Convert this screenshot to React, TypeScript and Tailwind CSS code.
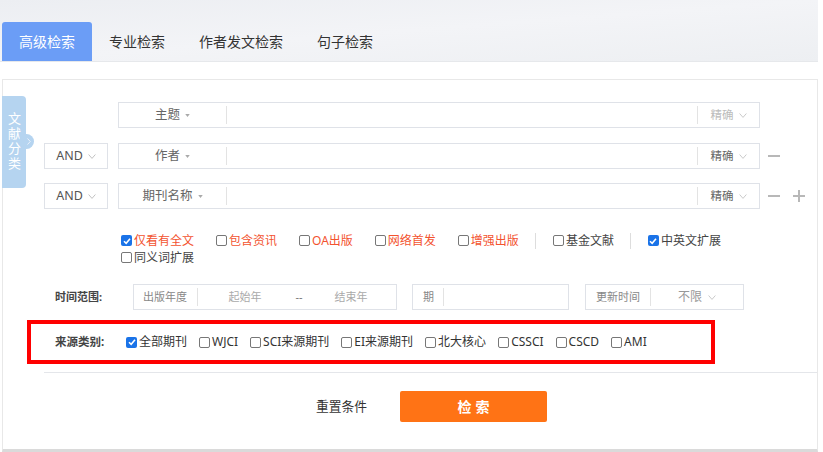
const tabs = ['高级检索', '专业检索', '作者发文检索', '句子检索'];

function Vee({ className = '' }: { className?: string }) {
  return (
    <svg viewBox="0 0 8 5" className={`h-[5px] w-[8px] ${className}`}>
      <path d="M0.6 0.5 4 4.4 7.4 0.5" fill="none" stroke="currentColor" strokeWidth="0.9" />
    </svg>
  );
}

function Caret() {
  return (
    <svg viewBox="0 0 6 4" className="h-[3px] w-[5px] text-[#aaa]">
      <path d="M0 0h6L3 4z" fill="currentColor" />
    </svg>
  );
}

function Box({ checked }: { checked?: boolean }) {
  if (checked)
    return (
      <span className="flex h-[11px] w-[11px] shrink-0 items-center justify-center rounded-[2px] bg-[#1a73e8]">
        <svg viewBox="0 0 12 12" className="h-[10px] w-[10px]">
          <path d="M2.4 6.3 5 8.8 9.6 3.4" fill="none" stroke="#fff" strokeWidth="1.9" />
        </svg>
      </span>
    );
  return <span className="h-[11px] w-[11px] shrink-0 rounded-[2px] border border-[#777] bg-white" />;
}

type RowProps = { label: string; and?: boolean; faint?: boolean; minus?: boolean; plus?: boolean };

function SearchRow({ label, and, faint, minus, plus }: RowProps) {
  return (
    <div className="flex h-[26px] items-center">
      {and ? (
        <div className="flex h-full w-[64px] items-center justify-center gap-[5px] border border-[#dfe2e8] text-[12.5px] text-[#555]">
          AND
          <Vee className="text-[#bbb]" />
        </div>
      ) : (
        <div className="w-[64px]" />
      )}
      <div className="ml-[10px] flex h-full w-[642px] items-center border border-[#dfe2e8]">
        <div className="flex w-[107px] items-center justify-center gap-[5px] text-[12.5px] text-[#666]">
          {label}
          <Caret />
        </div>
        <div className="h-[18px] w-px bg-[#e3e3e3]" />
        <div className="flex-1" />
        <div className="h-[18px] w-px bg-[#e3e3e3]" />
        <div
          className={`flex w-[61px] items-center justify-center gap-[5px] text-[11.5px] ${faint ? 'text-[#bbb]' : 'text-[#666]'}`}
        >
          精确
          <Vee className="text-[#c4c4c4]" />
        </div>
      </div>
      {minus && <div className="ml-[8px] h-[2px] w-[12px] bg-[#b8b8b8]" />}
      {plus && (
        <svg viewBox="0 0 12 12" className="ml-[13px] h-[12px] w-[12px]">
          <path d="M0 6h12M6 0v12" stroke="#b8b8b8" strokeWidth="2" />
        </svg>
      )}
    </div>
  );
}

const opts = [
  { t: '仅看有全文', red: true, on: true },
  { t: '包含资讯', red: true },
  { t: 'OA出版', red: true },
  { t: '网络首发', red: true },
  { t: '增强出版', red: true, sep: true },
  { t: '基金文献', sep: true },
  { t: '中英文扩展', on: true },
  { t: '同义词扩展' },
];

const sources = ['全部期刊', 'WJCI', 'SCI来源期刊', 'EI来源期刊', '北大核心', 'CSSCI', 'CSCD', 'AMI'];

export default function App() {
  return (
    <div className="h-[452px] w-[823px] overflow-hidden bg-white font-['Noto_Sans','Noto_Sans_CJK_SC',sans-serif] text-[#333]">
      <div className="flex h-[62px] w-[818px] items-end border-b border-[#e6e8eb] bg-gradient-to-br from-[#eceef2] via-[#f3f4f7] to-[#edeff2] pl-[2px]">
        {tabs.map((t, i) => (
          <div
            key={t}
            className={`flex h-[39px] items-center px-[17px] text-[14px] leading-none ${
              i === 0 ? 'rounded-t-[3px] bg-[#6b9df6] text-white' : 'text-[#333]'
            }`}
          >
            {t}
          </div>
        ))}
      </div>

      <div className="relative ml-[2px] mt-[17px] h-[373px] w-[816px] border border-[#e8e8e8] border-b-[3px] border-b-[#dadada] pl-[41px] pt-[22px]">
        {/* side tab */}
        <div className="absolute left-[-1px] top-[16px] flex h-[92px] w-[24px] items-center justify-center rounded-r-[4px] bg-[#b5d4f0] text-white">
          <span className="text-[13px] leading-[24px] tracking-[2px] [writing-mode:vertical-rl]">文献分类</span>
          <div className="absolute left-[17px] top-[38px] flex h-[15px] w-[15px] items-center justify-end rounded-full bg-[#b5d4f0] pr-[3px]">
            <svg viewBox="0 0 4 7" className="h-[7px] w-[4px]">
              <path d="M0.5 0.5 3.3 3.5 0.5 6.5" fill="none" stroke="#e8f1fb" strokeWidth="1" />
            </svg>
          </div>
        </div>

        <SearchRow label="主题" faint />
        <div className="mt-[15px]">
          <SearchRow label="作者" and minus />
        </div>
        <div className="mt-[14px]">
          <SearchRow label="期刊名称" and minus plus />
        </div>

        <div className="ml-[77px] mt-[23px] flex w-[630px] flex-wrap items-center text-[12px] leading-[17px]">
          {opts.map((o) => (
            <div key={o.t} className="flex items-center">
              <div className={`flex items-center gap-[2px] ${o.sep ? 'mr-[16px]' : 'mr-[22px]'}`}>
                <Box checked={o.on} />
                <span className={o.red ? 'text-[#f3532f]' : 'text-[#444]'}>{o.t}</span>
              </div>
              {o.sep && <div className="mr-[17px] h-[16px] w-px bg-[#ddd]" />}
            </div>
          ))}
        </div>

        <div className="mt-[18px] flex h-[26px] items-center text-[11px]">
          <div className="w-[89px] pl-[11px] font-bold text-[#444]">时间范围:</div>
          <div className="flex h-full w-[264px] items-center border border-[#dfe2e8]">
            <div className="w-[63px] pl-[9px] text-[#888]">出版年度</div>
            <div className="h-[18px] w-px bg-[#e3e3e3]" />
            <div className="w-[94px] text-center text-[#aaa]">起始年</div>
            <div className="w-[14px] text-center text-[#777]">--</div>
            <div className="flex-1 text-center text-[#aaa]">结束年</div>
          </div>
          <div className="ml-[15px] flex h-full w-[157px] items-center border border-[#dfe2e8]">
            <div className="pl-[10px] text-[#888]">期</div>
            <div className="ml-[9px] h-[18px] w-px bg-[#e3e3e3]" />
          </div>
          <div className="ml-[16px] flex h-full w-[159px] items-center border border-[#dfe2e8]">
            <div className="pl-[10px] text-[#888]">更新时间</div>
            <div className="ml-[10px] h-[18px] w-px bg-[#e3e3e3]" />
            <div className="flex flex-1 items-center justify-center gap-[6px] text-[12px] text-[#999]">
              不限
              <Vee className="text-[#c4c4c4]" />
            </div>
          </div>
        </div>

        <div className="ml-[-17px] mt-[10px] flex h-[44px] w-[688px] items-center border-4 border-[#ff0000] pl-[24px] text-[12px]">
          <div className="w-[71px] text-[11.5px] font-bold text-[#444]">来源类别:</div>
          <div className="flex items-center gap-[12px]">
            {sources.map((s, i) => (
              <div key={s} className="flex items-center gap-[2px] text-[#333]">
                <Box checked={i === 0} />
                <span>{s}</span>
              </div>
            ))}
          </div>
        </div>

        <div className="mt-[8px] border-t border-[#e4e6ea]" />

        <div className="ml-[272px] mt-[18px] flex items-center">
          <span className="text-[12.75px] text-[#333]">重置条件</span>
          <button className="ml-[33px] flex h-[31px] w-[147px] items-center justify-center rounded-[2px] bg-[#ff7315] pl-[4px] text-[14px] font-bold tracking-[4px] text-white">
            检索
          </button>
        </div>
      </div>
    </div>
  );
}
